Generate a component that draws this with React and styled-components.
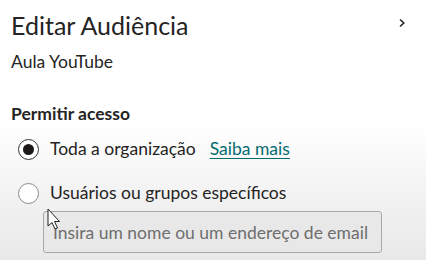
import { createGlobalStyle, styled } from "styled-components";

const GlobalStyle = createGlobalStyle`
  html, body {
    margin: 0;
    padding: 0;
  }
  body {
    width: 426px;
    height: 260px;
    overflow: hidden;
    font-family: Lato, "Noto Sans", sans-serif;
    color: #252423;
  }
`;

const Panel = styled.div`
  position: relative;
  width: 426px;
  height: 260px;
  box-sizing: border-box;
  padding: 8px 0 0 11px;
  background: linear-gradient(180deg, #ffffff 0%, #ffffff 48%, #f1f1f1 78%, #e9e9e9 100%);
`;

const Header = styled.div`
  display: flex;
  align-items: center;
  justify-content: space-between;
  padding-right: 19px;
`;

const Title = styled.h1`
  margin: 0;
  font-size: 25px;
  font-weight: 400;
  line-height: 34px;
`;

const Chevron = styled.svg`
  width: 10px;
  height: 10px;
  margin-top: -4px;
`;

const Subtitle = styled.div`
  margin-top: 10px;
  font-size: 17.5px;
  line-height: 20px;
`;

const SectionLabel = styled.div`
  margin-top: 32px;
  font-size: 17.5px;
  font-weight: 700;
  line-height: 20px;
`;

const Options = styled.div`
  display: flex;
  flex-direction: column;
  gap: 22px;
  margin-top: 14px;
  padding-left: 7px;
`;

const Option = styled.label`
  display: flex;
  align-items: center;
  gap: 11px;
  font-size: 17.5px;
  line-height: 22px;
`;

const Radio = styled.span`
  box-sizing: border-box;
  width: 21px;
  height: 21px;
  border-radius: 50%;
  border: 1px solid ${(p) => (p.$checked ? "#333" : "#8a8a8a")};
  display: flex;
  align-items: center;
  justify-content: center;
  background: #fff;

  &::after {
    content: "";
    width: 11px;
    height: 11px;
    border-radius: 50%;
    background: ${(p) => (p.$checked ? "#1b1a19" : "transparent")};
  }
`;

const LearnMore = styled.a`
  margin-left: 14px;
  color: #036c70;
  text-decoration: underline;
  text-underline-offset: 3px;
  text-decoration-thickness: 1px;
  cursor: pointer;
`;

const SearchInput = styled.input`
  box-sizing: border-box;
  display: block;
  margin: 7px 0 0 32px;
  width: 339px;
  height: 42px;
  padding: 0 9px;
  border: 1px solid #a8a8a8;
  border-radius: 3px;
  background: #e8e8e8;
  font-family: Lato, "Noto Sans", sans-serif;
  font-size: 17.5px;
  color: #333;

  &::placeholder {
    color: #6e6e6e;
  }
`;

const Pointer = styled.svg`
  position: absolute;
  left: 47px;
  top: 208px;
  width: 16px;
  height: 24px;
`;

export default function App() {
  return (
    <>
      <GlobalStyle />
      <Panel>
        <Header>
          <Title>Editar Audiência</Title>
          <Chevron viewBox="0 0 10 10">
            <path d="M3 1.5 L6.8 5 L3 8.5" fill="none" stroke="#252423" strokeWidth="1.6" />
          </Chevron>
        </Header>
        <Subtitle>Aula YouTube</Subtitle>
        <SectionLabel>Permitir acesso</SectionLabel>
        <Options>
          <Option>
            <Radio $checked />
            <span>
              Toda a organização
              <LearnMore>Saiba mais</LearnMore>
            </span>
          </Option>
          <Option>
            <Radio />
            <span>Usuários ou grupos específicos</span>
          </Option>
        </Options>
        <SearchInput placeholder="Insira um nome ou um endereço de email" />
        <Pointer viewBox="0 0 16 24">
          <path
            d="M1 1 L1 18 L5 14.5 L8 21 L10.5 20 L7.5 13.5 L12.5 13.5 Z"
            fill="#ffffff"
            stroke="#222"
            strokeWidth="1"
            strokeLinejoin="round"
          />
        </Pointer>
      </Panel>
    </>
  );
}
